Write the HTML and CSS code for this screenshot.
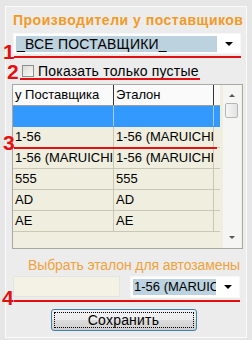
FILE: index.html
```html
<!DOCTYPE html>
<html lang="ru">
  <head>
    <meta charset="UTF-8" />
    <title>Производители у поставщиков</title>
    <link rel="stylesheet" href="styles.css">
  </head>
  <body>
    <main class="panel">
      <h1 class="title">Производители у поставщиков</h1>

      <section class="marked">
        <span class="num num-1">1</span>
        <div class="combo combo-wide">
          <span class="combo-value">_ВСЕ ПОСТАВЩИКИ_</span>
          <span class="combo-arrow"></span>
        </div>
        <span class="line line-1"></span>
      </section>

      <section class="marked check-row">
        <span class="num num-2">2</span>
        <span class="checkbox"></span>
        <span class="check-label">Показать только пустые</span>
        <span class="line line-2"></span>
      </section>

      <section class="marked grid">
        <div class="grid-body">
          <div class="row head">
            <div class="cell">у Поставщика</div>
            <div class="cell">Эталон</div>
          </div>
          <div class="row selected">
            <div class="cell"></div>
            <div class="cell"></div>
          </div>
          <div class="row">
            <div class="cell">1-56</div>
            <div class="cell">1-56 (MARUICHI)</div>
          </div>
          <div class="row">
            <div class="cell">1-56 (MARUICHI)</div>
            <div class="cell">1-56 (MARUICHI)</div>
          </div>
          <div class="row">
            <div class="cell">555</div>
            <div class="cell">555</div>
          </div>
          <div class="row">
            <div class="cell">AD</div>
            <div class="cell">AD</div>
          </div>
          <div class="row">
            <div class="cell">AE</div>
            <div class="cell">AE</div>
          </div>
        </div>
        <div class="scrollbar">
          <span class="sb-arrow up"></span>
          <span class="sb-thumb"></span>
          <span class="sb-arrow down"></span>
        </div>
        <span class="num num-3">3</span>
        <span class="line line-3"></span>
      </section>

      <p class="sub-title">Выбрать эталон для автозамены</p>

      <section class="marked replace-row">
        <span class="num num-4">4</span>
        <div class="textbox"></div>
        <div class="combo combo-small">
          <span class="combo-value">1-56 (MARUICHI)</span>
          <span class="combo-arrow"></span>
        </div>
        <span class="line line-4"></span>
      </section>

      <div class="actions">
        <button class="save">Сохранить</button>
      </div>
    </main>
  </body>
</html>
```

FILE: styles.css
```css
/* styles.css */
body {
  margin: 0;
  background-color: #e6e6e6;
  font-family: "Liberation Sans", Arial, sans-serif;
  font-size: 14px;
  letter-spacing: 0.2px;
  color: #000;
}

.panel {
  box-sizing: border-box;
  width: 242px;
  height: 332px;
  margin: 6px 0 0 5px;
  padding: 5px 5px 0 7px;
  border: 1px solid #fbfbfb;
  background-color: #ececec;
}

.title {
  margin: 0;
  font-size: 14px;
  line-height: 16px;
  font-weight: bold;
  letter-spacing: 0.5px;
  color: #f29a26;
  white-space: nowrap;
}

.marked {
  position: relative;
}

.num {
  position: absolute;
  font-size: 21px;
  line-height: 18px;
  font-weight: bold;
  letter-spacing: 0;
  color: #e41010;
}
.num-1 { left: -10px; top: 10px; }
.num-2 { left: -6px; top: 0; }
.num-3 { left: -10px; top: 49px; }
.num-4 { left: -11px; top: 13px; }

.line {
  position: absolute;
  height: 2px;
  background-color: #e41010;
}
.line-1 { left: 1px; right: 0; top: 23px; }
.line-2 { left: 7px; width: 180px; top: 15px; }
.line-3 { left: 1px; width: 203px; top: 62px; }
.line-4 { left: 1px; right: 1px; top: 24px; }

/* combo boxes */
.combo {
  box-sizing: border-box;
  display: flex;
  align-items: center;
  height: 21px;
  padding: 2px;
  border: 1px solid #f7f7f7;
  background-color: #fff;
  overflow: hidden;
}
.combo-wide {
  margin-top: 5px;
  width: 228px;
}
.combo-value {
  flex: 1;
  height: 16px;
  line-height: 16px;
  padding-left: 1px;
  background-color: #bcd2de;
  white-space: nowrap;
  overflow: hidden;
}
.combo-arrow {
  flex: none;
  width: 0;
  height: 0;
  margin: 0 5px 0 8px;
  border-left: 4px solid transparent;
  border-right: 4px solid transparent;
  border-top: 4px solid #000;
}

/* checkbox */
.check-row {
  display: flex;
  align-items: center;
  gap: 4px;
  height: 16px;
  margin-top: 9px;
  padding-left: 9px;
}
.checkbox {
  box-sizing: border-box;
  width: 12px;
  height: 12px;
  border: 1px solid #8e8f8f;
  background: linear-gradient(135deg, #dcdcd6, #f8f8f6);
}

/* grid */
.grid {
  box-sizing: border-box;
  display: flex;
  width: 231px;
  height: 165px;
  margin: 5px 0 0 -1px;
  border: 1px solid #a9a9a2;
  background-color: #efeedf;
  font-size: 13px;
  letter-spacing: 0;
}
.grid-body {
  width: 207px;
}
.row {
  display: grid;
  grid-template-columns: 101px 100px;
  height: 21px;
  border-bottom: 1px solid #c8c8b4;
  box-sizing: border-box;
}
.cell {
  padding-left: 2px;
  line-height: 20px;
  white-space: nowrap;
  overflow: hidden;
  border-right: 1px solid #c8c8b4;
}
.head {
  background-color: #fafafa;
  border-bottom: 1px solid #9d9d9d;
}
.head .cell {
  border-right: 1px solid #333;
  line-height: 19px;
}
.selected {
  background-color: #3399fe;
  border-bottom-color: #3399fe;
}
.selected .cell {
  border-right-color: #a8cdf2;
}

.scrollbar {
  position: relative;
  width: 18px;
  margin-left: auto;
  margin-right: 1px;
  background-color: #f5f5f3;
}
.sb-thumb {
  position: absolute;
  left: 2px;
  top: 18px;
  width: 13px;
  height: 15px;
  box-sizing: border-box;
  border: 1px solid #b5b5b5;
  border-radius: 2px;
  background: linear-gradient(90deg, #f6f6f6, #e4e4e4);
}
.sb-arrow {
  position: absolute;
  left: 6px;
  width: 0;
  height: 0;
  border-left: 3px solid transparent;
  border-right: 3px solid transparent;
}
.sb-arrow.up {
  top: 9px;
  border-bottom: 3px solid #555;
}
.sb-arrow.down {
  bottom: 9px;
  border-top: 3px solid #555;
}

/* replacement */
.sub-title {
  margin: 8px 0 0;
  padding-right: 1px;
  text-align: right;
  line-height: 16px;
  letter-spacing: -0.1px;
  color: #f0a33c;
  white-space: nowrap;
}
.replace-row {
  display: flex;
  gap: 10px;
  margin-top: 3px;
  height: 22px;
}
.textbox {
  box-sizing: border-box;
  width: 107px;
  height: 21px;
  border: 1px solid #e4e4e0;
  background-color: #f4f2e4;
}
.combo-small {
  width: 110px;
  height: 22px;
  font-size: 13px;
  letter-spacing: 0;
}

.actions {
  display: flex;
  justify-content: center;
  margin-top: 11px;
  padding-right: 7px;
}
.save {
  box-sizing: border-box;
  width: 146px;
  height: 22px;
  padding: 0;
  font-family: inherit;
  font-size: 14px;
  letter-spacing: 0.2px;
  color: #000;
  border: 1px solid #3c7fb1;
  border-radius: 3px;
  background: linear-gradient(#f2f2f2 0%, #ebebeb 50%, #dddddd 51%, #cfcfcf 100%);
  outline: 1px dotted #000;
  outline-offset: -4px;
}
```
